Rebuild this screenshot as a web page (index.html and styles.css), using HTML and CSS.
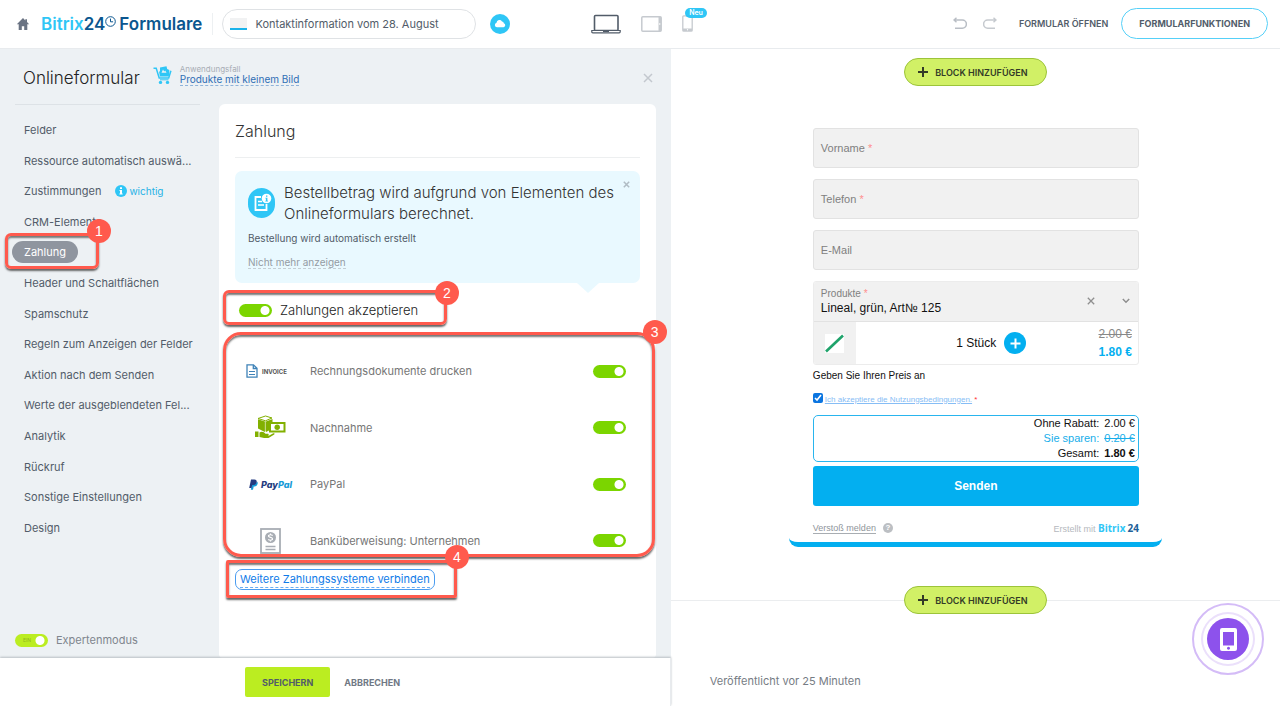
FILE: index.html
```html
<!DOCTYPE html>
<html lang="de">
<head>
<meta charset="utf-8">
<title>Bitrix24 Formulare</title>
<link rel="stylesheet" href="styles.css">
</head>
<body>
<header class="topbar">
  <div class="topbar-left">
    <a class="home" href="#" aria-label="Startseite"><svg width="14" height="14" viewBox="0 0 14 14"><path d="M7 1 0.8 7.2h1.9V13h3.1V9.2h2.4V13h3.1V7.2h1.9L11 5V2.2H9.3v1.2z" fill="#6a7383"/></svg></a>
    <a class="logo" href="#"><span class="logo-light">Bitrix</span><span>24</span><svg class="clock" width="11" height="11" viewBox="0 0 11 11"><circle cx="5.5" cy="5.5" r="4.8" fill="none" stroke="#0b568f"/><path d="M5.5 2.6v3.2h2.6" fill="none" stroke="#0b568f"/></svg><span class="logo-word">Formulare</span></a>
    <button class="form-name" type="button"><span class="thumb"></span>Kontaktinformation vom 28. August</button>
    <button class="cloud" type="button" aria-label="Cloud"><svg width="12" height="9" viewBox="0 0 12 9"><path d="M3 8.2A2.3 2.3 0 0 1 2.5 3.700A3 3 0 0 1 8 2.400A2 2 0 0 1 9.800 4.300A2 2 0 0 1 9.600 8.200z" fill="#fff"/></svg></button>
  </div>
  <div class="devices">
    <button type="button" aria-label="Desktop"><svg width="30" height="20" viewBox="0 0 30 20"><rect x="3.500" y="1.500" width="23.500" height="15" rx="1" fill="none" stroke="#525c69" stroke-width="1.600"/><path d="M.8 16.500h28.400v1.300q0 1-1 1H1.800q-1 0-1-1z" fill="#fff" stroke="#525c69" stroke-width="1.200"/><path d="M12 17.500h6" stroke="#525c69"/></svg></button>
    <button type="button" aria-label="Tablet"><svg width="21" height="16" viewBox="0 0 21 16"><rect x=".8" y=".8" width="19.400" height="14.400" rx="1" fill="none" stroke="#c6cacf" stroke-width="1.500"/><path d="M17.500 1h2.500v14h-2.500z" fill="#c6cacf"/><circle cx="18.700" cy="8" r=".8" fill="#fff"/></svg></button>
    <button type="button" class="phone" aria-label="Smartphone"><svg width="11" height="17" viewBox="0 0 11 17"><rect x=".8" y=".8" width="9.400" height="15.400" rx="1" fill="none" stroke="#c6cacf" stroke-width="1.300"/><path d="M1 13.500h9v2.500H1z" fill="#c6cacf"/><circle cx="5.500" cy="14.800" r=".7" fill="#fff"/></svg><span class="neu">Neu</span></button>
  </div>
  <div class="topbar-right">
    <button type="button" aria-label="Rückgängig"><svg width="14" height="13" viewBox="0 0 14 13"><path d="M1 3h8.300a3.900 3.900 0 0 1 0 8.200H2M3.500.8 1 3l2.500 2.200" fill="none" stroke="#b9bec5" stroke-width="1.500"/></svg></button>
    <button type="button" aria-label="Wiederholen"><svg width="14" height="13" viewBox="0 0 14 13"><path d="M13 3H4.700a3.900 3.900 0 0 0 0 8.200H12M10.500.8 13 3l-2.500 2.200" fill="none" stroke="#c6cacf" stroke-width="1.500"/></svg></button>
    <a class="open-link" href="#">FORMULAR ÖFFNEN</a>
    <button class="functions" type="button">FORMULARFUNKTIONEN</button>
  </div>
</header>

<main class="main">
  <section class="editor">
    <div class="editor-head">
      <h1>Onlineformular</h1>
      <svg class="cart" width="20" height="19" viewBox="0 0 20 19"><path d="M.5 2.200h2.700l3 9.800h9.500l2.200-7.200" fill="none" stroke="#2fc6f6" stroke-width="1.500"/><path d="M6 5.500h1v-4l6.500-1.200.7 2.700 2.100 1v4.800l-.8 1.800H6.900z" fill="#2fc6f6"/><path d="M8.500 6.800 10 3.500l1.200 2 1-1 1.300 2.300z" fill="#edf1f4"/><circle cx="7.500" cy="16.400" r="1.700" fill="#2fc6f6"/><circle cx="14.500" cy="16.400" r="1.700" fill="#2fc6f6"/><path d="M7 13.800h8.500" stroke="#2fc6f6"/></svg>
      <div class="usecase"><span>Anwendungsfall</span><a href="#">Produkte mit kleinem Bild</a></div>
      <button class="close" type="button" aria-label="Schließen"><svg width="10" height="10" viewBox="0 0 10 10"><path d="m1 1 8 8M9 1 1 9" stroke="#c3c8ce" stroke-width="1.500"/></svg></button>
    </div>
    <div class="columns">
      <aside class="sidebar">
        <nav>
          <ul class="menu">
            <li><a href="#">Felder</a></li>
            <li><a href="#">Ressource automatisch auswä...</a></li>
            <li><a href="#">Zustimmungen</a><span class="important"><svg width="12" height="12" viewBox="0 0 12 12"><circle cx="6" cy="6" r="6" fill="#2fc6f6"/><path d="M5 2.300h2v1.600H5zM4.500 5H7v3.600h.7v1H4.400v-1H5V6h-.5z" fill="#fff"/></svg>wichtig</span></li>
            <li><a href="#">CRM-Elemente</a></li>
            <li class="active"><a href="#">Zahlung</a><span class="callout callout-1"><b>1</b></span></li>
            <li><a href="#">Header und Schaltflächen</a></li>
            <li><a href="#">Spamschutz</a></li>
            <li><a href="#">Regeln zum Anzeigen der Felder</a></li>
            <li><a href="#">Aktion nach dem Senden</a></li>
            <li><a href="#">Werte der ausgeblendeten Fel...</a></li>
            <li><a href="#">Analytik</a></li>
            <li><a href="#">Rückruf</a></li>
            <li><a href="#">Sonstige Einstellungen</a></li>
            <li><a href="#">Design</a></li>
          </ul>
        </nav>
        <label class="expert"><span class="expert-switch"><input class="switch lime" type="checkbox" checked><span>EIN</span></span>Expertenmodus</label>
      </aside>
      <div class="card">
        <h2>Zahlung</h2>
        <div class="notice">
          <div class="notice-head">
            <svg width="27" height="30" viewBox="0 0 27 30"><rect width="27" height="30" rx="13.500" fill="#2fc6f6"/><path d="M13 9H7.500v13h11v-6" fill="none" stroke="#fff" stroke-width="1.800"/><path d="M10 13.500h4M10 17h6" stroke="#fff" stroke-width="1.300"/><circle cx="18.500" cy="10.500" r="4.800" fill="#fff"/><path d="M18 7.500h1.400v1.200H18zM17.400 9.800h2v3h.6v.8h-2.700v-.8h.6v-2.200h-.5z" fill="#2fc6f6"/></svg>
            <p>Bestellbetrag wird aufgrund von Elementen des Onlineformulars berechnet.</p>
          </div>
          <p class="notice-text">Bestellung wird automatisch erstellt</p>
          <a class="notice-hide" href="#">Nicht mehr anzeigen</a>
          <button class="notice-close" type="button" aria-label="Hinweis schließen"><svg width="7" height="7" viewBox="0 0 7 7"><path d="m.8.8 5.400 5.400M6.200.8.8 6.200" stroke="#b0bcc4" stroke-width="1.500"/></svg></button>
        </div>
        <div class="accept">
          <label><input class="switch" type="checkbox" checked>Zahlungen akzeptieren</label>
          <span class="callout callout-2"><b>2</b></span>
        </div>
        <div class="systems">
          <ul>
            <li>
              <span class="pay-icon invoice"><svg width="12" height="14" viewBox="0 0 12 14"><path d="M1 .8h6.500L11 4.300v8.900H1zM7.300 1v3.500H11" fill="none" stroke="#3f83b8" stroke-width="1.300"/><path d="M3 7.500h6M3 10.500h6" stroke="#3f83b8"/></svg><span>INVOICE</span></span>
              <label for="p1">Rechnungsdokumente drucken</label><input id="p1" class="switch" type="checkbox" checked>
            </li>
            <li>
              <span class="pay-icon"><svg width="32" height="25" viewBox="0 0 32 25"><path d="M3 3.500 10.500 1 17 3l-6.500 2.800z" fill="none" stroke="#82b000"/><path d="M3 4.200 9.800 6.600V17L3 13.500zM11 6.600l6.500-2.700V7.500H14V15.500l-3 1.500z" fill="#82b000"/><path d="M10 6.500v10" stroke="#82b000"/><rect x="15" y="8" width="14.500" height="8.500" fill="#fff" stroke="#82b000" stroke-width="2"/><circle cx="22.200" cy="12.200" r="2.700" fill="#82b000"/><path d="M0 16.500h3.500V22H0zM4.500 17.500c3-1.500 4.500 0 6 1.200h2.700q1.500 1-.4 1.800h-3.500 5l4-2.200q2-.3 1 1.200L13.500 23H9l-4.500-1z" fill="#82b000"/></svg></span>
              <label for="p2">Nachnahme</label><input id="p2" class="switch" type="checkbox" checked>
            </li>
            <li>
              <span class="pay-icon paypal"><svg width="9" height="11" viewBox="0 0 9 11"><path d="M8 2.500q1.200 1 .5 2.800Q7.700 7.500 5.500 7.500H4.700L4 10.800H1.800L3 5H4.500Q7.300 5 8 2.500" fill="#179bd7"/><path d="M2 .5h3.500Q8.500.8 7.500 3.700 6.700 6 4 6H3.200L2.500 9H.2z" fill="#253b80"/></svg><span>Pay<i>Pal</i></span></span>
              <label for="p3">PayPal</label><input id="p3" class="switch" type="checkbox" checked>
            </li>
            <li>
              <span class="pay-icon"><svg width="21" height="26" viewBox="0 0 21 26"><rect x="1" y="1" width="19" height="24" fill="none" stroke="#a8adb4" stroke-width="1.800"/><circle cx="10.500" cy="9.500" r="5.500" fill="#a8adb4"/><path d="M12.700 7.600Q10.500 6 8.600 7.400q-.5 1.500 1.900 2t1.900 2.200Q10.500 13 8.200 11.600M10.500 5.500v1.500M10.500 12v1.500" fill="none" stroke="#fff" stroke-width="1.200"/><path d="M5.500 18.500h10M5.500 21.500h10" stroke="#a8adb4" stroke-width="1.500"/></svg></span>
              <label for="p4">Banküberweisung: Unternehmen</label><input id="p4" class="switch" type="checkbox" checked>
            </li>
          </ul>
          <span class="callout callout-3"><b>3</b></span>
        </div>
        <div class="more">
          <a href="#"><span>Weitere Zahlungssysteme verbinden</span></a>
          <span class="callout callout-4"><b>4</b></span>
        </div>
      </div>
    </div>
    <footer class="actions">
      <button class="save" type="button">SPEICHERN</button>
      <button class="cancel" type="button">ABBRECHEN</button>
    </footer>
  </section>

  <section class="preview">
    <div class="preview-canvas">
      <button class="add-block" type="button"><svg width="10" height="10" viewBox="0 0 10 10"><path d="M5 0v10M0 5h10" stroke="#333b27" stroke-width="2"/></svg>BLOCK HINZUFÜGEN</button>
      <form class="crm-form">
        <div class="field"><input id="f1" type="text"><label for="f1">Vorname <em>*</em></label></div>
        <div class="field"><input id="f2" type="tel"><label for="f2">Telefon <em>*</em></label></div>
        <div class="field"><input id="f3" type="email"><label for="f3">E-Mail</label></div>
        <div class="product">
          <div class="product-select">
            <label for="f4">Produkte <em>*</em></label>
            <select id="f4"><option>Lineal, grün, Art№ 125</option></select>
            <span class="product-icons"><button type="button" aria-label="Entfernen"><svg width="8" height="8" viewBox="0 0 8 8"><path d="m.8.8 6.400 6.400M7.200.8.8 7.200" stroke="#8f8f8f" stroke-width="1.300"/></svg></button><svg width="8" height="6" viewBox="0 0 8 6"><path d="m.8 1 3.200 3.200L7.200 1" fill="none" stroke="#8f8f8f" stroke-width="1.500"/></svg></span>
          </div>
          <div class="product-row">
            <div class="product-pic"><svg width="19" height="19" viewBox="0 0 19 19"><path d="M0 0h19v19H0z" fill="#fff"/><path d="M1 17.500 18 1.500" stroke="#1fa36b" stroke-width="2.600"/></svg></div>
            <div class="qty">1 Stück<button type="button" aria-label="Mehr"><svg width="11" height="11" viewBox="0 0 11 11"><path d="M5.500.5v10M.5 5.500h10" stroke="#fff" stroke-width="2"/></svg></button></div>
            <div class="price"><s>2.00 €</s><strong>1.80 €</strong></div>
          </div>
        </div>
        <p class="own-price">Geben Sie Ihren Preis an</p>
        <div class="agree"><input id="agree" type="checkbox" checked><label for="agree"><a href="#">Ich akzeptiere die Nutzungsbedingungen.</a> <em>*</em></label></div>
        <table class="totals">
          <tr><td>Ohne Rabatt:</td><td>2.00 €</td></tr>
          <tr class="saving"><td>Sie sparen:</td><td><s>0.20 €</s></td></tr>
          <tr><td>Gesamt:</td><td><b>1.80 €</b></td></tr>
        </table>
        <button class="send" type="button">Senden</button>
        <div class="form-foot">
          <a href="#">Verstoß melden</a><span class="help">?</span>
          <span class="made">Erstellt mit <b>Bitrix</b><b class="n24">24</b></span>
        </div>
      </form>
      <div class="add-bottom"><button class="add-block" type="button"><svg width="10" height="10" viewBox="0 0 10 10"><path d="M5 0v10M0 5h10" stroke="#333b27" stroke-width="2"/></svg>BLOCK HINZUFÜGEN</button></div>
    </div>
    <p class="published">Veröffentlicht vor 25 Minuten</p>
    <button class="fab" type="button" aria-label="Mobile App"><span><svg width="17" height="23" viewBox="0 0 17 23"><path d="M2 0h13q2 0 2 2v19q0 2-2 2H2q-2 0-2-2V2q0-2 2-2zM3 4v13.500h11V4zM8.500 18.700a1.500 1.500 0 1 0 .01 0z" fill="#fff" fill-rule="evenodd"/></svg></span></button>
  </section>
</main>
</body>
</html>
```
FILE: styles.css
```css
* { box-sizing: border-box; }
body { margin: 0; height: 100vh; display: flex; flex-direction: column; overflow: hidden; background: #fff; font-family: Inter, "Noto Sans", sans-serif; font-size: 11px; color: #525c69; }
h1, h2, p, ul { margin: 0; padding: 0; }
ul { list-style: none; }
a { color: inherit; text-decoration: none; }
button { font: inherit; color: inherit; background: none; border: 0; padding: 0; cursor: pointer; }
svg { display: block; flex: none; }
em { font-style: normal; color: #ff8f8f; }

.topbar { flex: none; height: 49px; display: grid; grid-template-columns: 1fr auto 1fr; align-items: center; padding: 0 12px 1px 16px; border-bottom: 1px solid #e8ebee; }
.topbar-left, .topbar-right, .devices { display: flex; align-items: center; }
.home { margin-right: 11px; }
.logo { display: flex; align-items: center; height: 22px; font-size: 17px; font-weight: 600; color: #0b568f; padding-right: 10px; border-right: 1px solid #edf0f2; }
.logo-light { color: #2fc6f6; }
.clock { margin: 0 3px 5px 0; }
.form-name { display: flex; align-items: center; gap: 8px; height: 30px; margin-left: 9px; padding: 0 36px 0 7px; border: 1px solid #dfe2e5; border-radius: 15px; white-space: nowrap; }
.thumb { width: 17px; height: 12px; background: #f1f2f3; border-bottom: 2px solid #19b2ea; }
.cloud { display: grid; place-items: center; width: 20px; height: 20px; margin-left: 14px; border-radius: 50%; background: #2fc6f6; }
.devices { gap: 20px; }
.phone { position: relative; }
.neu { position: absolute; left: 3px; top: -7px; width: 22px; border-radius: 5px; background: #2fc6f6; color: #fff; font-size: 7px; font-weight: 600; line-height: 10px; }
.topbar-right { justify-content: flex-end; font-size: 9px; font-weight: 600; }
.topbar-right button:first-child { margin-right: 16px; }
.open-link { margin: 0 13px 0 22px; }
.functions { height: 31px; padding: 0 17px; border: 1px solid #55d0f8; border-radius: 16px; font-weight: 700; }

.main { flex: 1; min-height: 0; display: flex; }
.editor { width: 52.4%; display: flex; flex-direction: column; background: #edf1f4; }
.editor-head { flex: none; height: 55px; display: flex; align-items: center; padding: 2px 18px 0 23px; }
h1 { font-size: 17px; font-weight: 300; color: #222; }
.cart { margin: 0 7px 4px 13px; }
.usecase { display: flex; flex-direction: column; font-size: 10px; line-height: 11px; margin-bottom: 6px; color: #2f6eb4; }
.usecase span { font-size: 8px; line-height: 10px; color: #a8adb4; }
.usecase a { border-bottom: 1px dashed #8fb3da; }
.close { margin-left: auto; }
.columns { flex: 1; min-height: 0; display: flex; padding-right: 15px; }
.sidebar { flex: none; width: 219px; display: flex; flex-direction: column; justify-content: space-between; padding: 0 19px 8px 15px; }
.sidebar nav { border-top: 1px solid #dde2e6; padding-top: 14px; }
.menu { height: 420px; display: flex; flex-direction: column; justify-content: space-between; margin: 0 -8px 0 -3px; line-height: 22px; }
.menu li { position: relative; display: flex; align-items: center; white-space: nowrap; }
.menu a { padding: 0 12px; border-radius: 11px; }
.active a { background: #8f959f; color: #fff; }
.important { display: flex; align-items: center; gap: 2px; margin-left: 2px; font-size: 10px; color: #1fb1e6; }
.expert { display: flex; align-items: center; gap: 8px; line-height: 20px; color: #80868e; }
.expert-switch { position: relative; display: flex; }
.expert-switch span { position: absolute; left: 8px; top: 0; font-size: 5px; line-height: 13px; color: #8fb520; }

.switch { appearance: none; flex: none; width: 33px; height: 13px; margin: 0; border-radius: 7px; background: radial-gradient(circle at 26px 50%, #fff 4px, #7bd500 5px); }
.switch.lime { background: radial-gradient(circle at 25px 50%, #fff 4px, #bbed21 5px); }

.card { flex: 1; min-width: 0; padding: 0 16px; border-radius: 6px 6px 4px 4px; background: #fff; }
h2 { height: 54px; line-height: 54px; font-size: 16px; font-weight: 300; color: #333; border-bottom: 1px solid #edeff0; }
.notice { position: relative; margin-top: 13px; height: 112px; padding: 11px 20px 0 13px; border-radius: 7px; background: #e9f9ff; }
.notice::after { content: ""; position: absolute; right: 41px; top: 100%; border: 11px solid transparent; border-top: 10px solid #e9f9ff; border-bottom: 0; }
.notice-head { display: flex; align-items: center; gap: 9px; font-size: 15px; font-weight: 300; line-height: 21px; color: #333; }
.notice-text { margin-top: 6px; font-size: 10px; line-height: 16px; }
.notice-hide { display: inline-block; margin-top: 10px; font-size: 10px; line-height: 12px; color: #949ba3; border-bottom: 1px dashed #c4ced4; }
.notice-close { position: absolute; right: 10px; top: 10px; }
.accept { position: relative; height: 60px; padding: 16px 0 0 4px; }
.accept label { display: inline-flex; align-items: center; gap: 8px; line-height: 22px; font-size: 13px; font-weight: 300; color: #222; }
.systems { position: relative; }
.systems ul { height: 226px; display: grid; grid-template-rows: repeat(4, 1fr); }
.systems li { display: flex; align-items: center; padding-right: 14px; color: #767676; }
.systems label { flex: 1; }
.pay-icon { flex: none; display: flex; align-items: center; justify-content: center; width: 71px; margin-right: 4px; }
.invoice { justify-content: flex-start; padding-left: 11px; gap: 4px; font-size: 6px; font-weight: 700; color: #555; }
.paypal { gap: 3px; font-size: 9px; font-weight: 800; font-style: italic; color: #253b80; }
.paypal i { color: #179bd7; }
.more { position: relative; }
.more a { display: inline-block; height: 21px; padding: 2px 4px; border: 1px solid #4a9cf0; border-radius: 7px; color: #0f7be8; line-height: 15px; }
.more a span { display: block; border-bottom: 1px dashed #69adf3; }

.callout { position: absolute; pointer-events: none; border: 3px solid #ff5a4d; border-radius: 6px; box-shadow: 0 2px 2px #666, inset 0 2px 2px #777; z-index: 2; }
.callout b { position: absolute; right: -15px; top: -15px; width: 24px; height: 24px; border-radius: 50%; background: #ff5a4d; color: #fff; font: 14px/24px "Liberation Sans", sans-serif; text-align: center; }
.callout-1 { left: -7px; top: -8px; width: 94px; height: 36px; }
.callout-1 b { top: -17px; }
.callout-2 { left: -12px; top: 7px; width: 224px; height: 35px; }
.callout-2 b { top: -12px; }
.callout-3 { left: -12px; right: -15px; top: -11px; height: 225px; border-radius: 18px; }
.callout-4 { left: -9px; top: -9px; width: 231px; height: 38px; border-radius: 2px; }
.callout-4 b { top: -18px; }

.actions { position: relative; flex: none; height: 48px; display: flex; align-items: center; gap: 14px; padding-left: 245px; background: #fff; border-right: 1px solid #e8ebee; box-shadow: 0 -1px 2px #b9bfc4; font-size: 9px; font-weight: 700; }
.save { height: 30px; padding: 0 17px; border-radius: 2px; background: #bbed21; }
.cancel { color: #707884; }

.preview { flex: 1; position: relative; display: flex; flex-direction: column; }
.preview-canvas { display: flex; flex-direction: column; align-items: center; padding-top: 9px; }
.add-block { display: flex; align-items: center; gap: 7px; height: 28px; padding: 0 18px 0 13px; border: 1px solid #9cc43a; border-radius: 14px; background: #d1f066; color: #333b27; font-size: 9px; font-weight: 600; }
.add-bottom { width: 100%; display: flex; justify-content: center; margin-top: 39px; background: linear-gradient(#ebedef, #ebedef) center / 100% 1px no-repeat; }
.crm-form { width: 373px; max-width: 100%; margin-top: 42px; padding: 0 23px 7px 24px; border-bottom: 5px solid #03aff0; border-radius: 9px; font-family: "Liberation Sans", Arial, sans-serif; color: #111; }
.field { position: relative; margin-bottom: 11px; }
.field input { display: block; width: 100%; height: 40px; padding: 0 8px; border: 1px solid #e2e2e2; border-radius: 3px; background: #f1f1f1; }
.field label { position: absolute; left: 8px; top: 13px; line-height: 14px; color: #808080; }
.product { border: 1px solid #ececec; border-radius: 3px; overflow: hidden; }
.product-select { position: relative; background: #f1f1f1; border-bottom: 1px solid #e2e2e2; padding: 6px 7px 0; height: 40px; }
.product-select label { display: block; font-size: 10px; line-height: 12px; color: #808080; }
.product-select select { appearance: none; display: block; width: 100%; height: 16px; padding: 0; border: 0; background: none; font: 12px/16px "Liberation Sans", Arial, sans-serif; color: #111; }
.product-icons { position: absolute; right: 8px; top: 0; height: 38px; display: flex; align-items: center; gap: 27px; }
.product-row { display: grid; grid-template-columns: 42px 1fr auto; height: 42px; align-items: center; }
.product-pic { display: grid; place-items: center; height: 42px; background: #f1f1f1; }
.qty { display: flex; align-items: center; justify-content: center; gap: 8px; padding-left: 28px; font-size: 12px; }
.qty button { display: grid; place-items: center; width: 22px; height: 22px; border-radius: 50%; background: #03aff0; }
.price { display: flex; flex-direction: column; align-items: flex-end; padding-right: 6px; font-size: 12px; line-height: 18px; }
.price s { color: #888; }
.price strong { color: #03aff0; }
.own-price { margin-top: 4px; font-size: 10px; line-height: 14px; }
.agree { display: flex; align-items: center; gap: 2px; margin-top: 8px; height: 16px; font-size: 8px; }
.agree input { width: 10px; height: 10px; margin: 0 0 3px; accent-color: #0b75e0; }
.agree a { color: #86bdf5; text-decoration: underline; }
.agree em { color: #f33; }
.totals { width: 100%; margin-top: 8px; border: 1px solid #29b5ee; border-radius: 5px; border-spacing: 0; font-size: 11px; line-height: 15px; }
.totals td { padding: 0 3px 0 0; text-align: right; white-space: nowrap; }
.totals td:first-child { width: 100%; padding-right: 5px; }
.saving { color: #17aeea; }
.send { display: block; width: 100%; height: 40px; margin-top: 4px; border-radius: 3px; background: #03aff0; color: #fff; font-size: 12px; font-weight: 700; }
.form-foot { display: flex; align-items: center; margin-top: 15px; height: 14px; font-size: 9px; color: #8f959b; }
.form-foot a { border-bottom: 1px solid #a8adb2; }
.help { width: 10px; height: 10px; margin-left: 7px; border-radius: 50%; background: #bcbfc3; color: #fff; font-size: 8px; line-height: 10px; font-weight: 700; text-align: center; }
.made { margin-left: auto; color: #b5b9be; }
.made b { font: 700 10px "Open Sans", sans-serif; color: #2fc6f6; }
.made .n24 { margin-left: 2px; color: #215f98; }
.published { margin-top: auto; padding: 0 0 15px 39px; line-height: 20px; color: #767c84; }
.fab { position: fixed; right: 16px; bottom: 31px; width: 72px; height: 72px; border: 2px solid #d4bcf7; border-radius: 50%; display: grid; place-items: center; }
.fab span { display: grid; place-items: center; width: 42px; height: 42px; border-radius: 50%; background: #8d52ec; box-shadow: 0 0 0 4px #fff, 0 0 0 6px #ebe0fb; }
```
